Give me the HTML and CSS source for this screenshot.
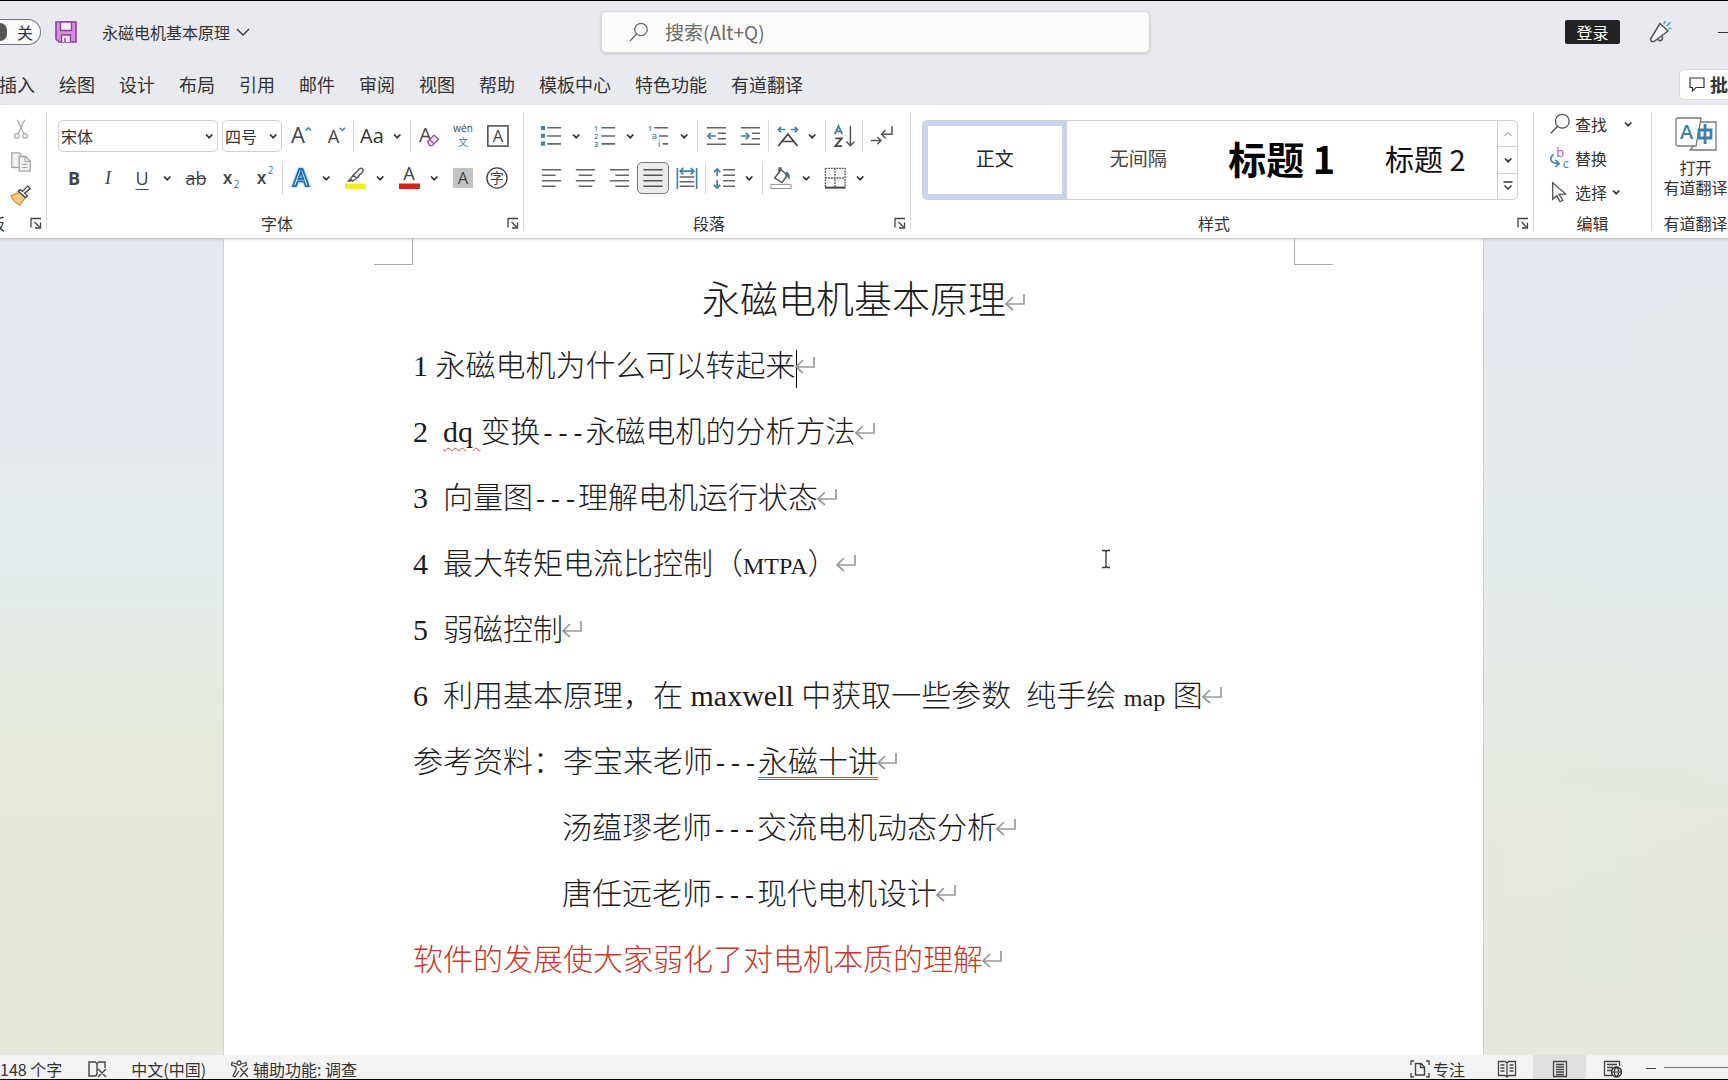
FILE: index.html
```html
<!DOCTYPE html>
<html lang="zh-CN">
<head>
<meta charset="utf-8">
<title>永磁电机基本原理</title>
<link rel="stylesheet" href="styles.css">
</head>
<body>
<svg class="defs" aria-hidden="true">
  <symbol id="chev" viewBox="0 0 16 16"><path d="M5 6.500l3.200 3.200L11.400 6.500" fill="none" stroke="#333" stroke-width="1.700"/></symbol>
  <symbol id="launch" viewBox="0 0 12 12"><path d="M1 10.500V1.500h10M4.500 5l5 5M10.500 5.500v5.500H5" fill="none" stroke="#444" stroke-width="1.300"/></symbol>
  <symbol id="ret" viewBox="0 0 22 22"><path d="M20 3v10H2.500M9 6l-7 7 7 6" fill="none" stroke="#999" stroke-width="1.700"/></symbol>
</svg>

<header class="titlebar">
  <div class="title-left">
    <button class="toggle" role="switch" aria-checked="false"><span class="knob"></span>关</button>
    <button class="bare save" aria-label="保存"><svg width="22" height="22" viewBox="0 0 22 22"><path d="M1 1h20v20H4l-3-3z" fill="#d58fdd" stroke="#8d3f9c" stroke-width="1.600"/><path d="M5.500 1v8.500h11V1z" fill="#f6eef8" stroke="#8d3f9c" stroke-width="1.400"/><path d="M6.500 21v-7h9v7M10 21v-4" fill="#f6eef8" stroke="#8d3f9c" stroke-width="1.400"/></svg></button>
    <button class="bare doc-name">永磁电机基本原理<svg width="14" height="14" viewBox="0 0 14 14"><path d="M1 4l6 6 6-6" fill="none" stroke="#333" stroke-width="1.300"/></svg></button>
  </div>
  <label class="search"><svg width="20" height="20" viewBox="0 0 20 20"><circle cx="12" cy="7.500" r="6.200" fill="none" stroke="#666" stroke-width="1.300"/><path d="M7.500 12L1 19" stroke="#666" stroke-width="1.300"/></svg><input type="text" placeholder="搜索(Alt+Q)" aria-label="搜索"></label>
  <div class="title-right">
    <button class="login">登录</button>
    <button class="bare horn" aria-label="反馈"><svg width="24" height="24" viewBox="0 0 24 24"><path d="M11 3.500l8 7.500L5 21.500H2.500L1.500 19zM9 19c1 3 5 2 4.500-2.500" fill="#f8f8fa" stroke="#555" stroke-width="1.500"/><path d="M15 4l1-3M18 6l3.500-4M19.500 8.500h3" stroke="#4b9cc8" stroke-width="1.500"/></svg></button>
    <button class="bare minimize" aria-label="最小化"><span></span></button>
  </div>
</header>

<nav class="tabs">
  <button>插入</button><button>绘图</button><button>设计</button><button>布局</button><button>引用</button><button>邮件</button><button>审阅</button><button>视图</button><button>帮助</button><button>模板中心</button><button>特色功能</button><button>有道翻译</button>
  <button class="comments"><svg width="16" height="15" viewBox="0 0 16 15"><path d="M1 1h14v9.500H7L3.500 14v-3.500H1z" fill="none" stroke="#333" stroke-width="1.200"/></svg>批</button>
</nav>

<section class="ribbon">
  <div class="group clipboard">
    <div class="stack">
      <button class="tool" aria-label="剪切"><svg viewBox="0 0 24 24"><path d="M8 2l7 15M16 2L9 17" fill="none" stroke="#a5a5a5" stroke-width="1.300"/><circle cx="7.500" cy="19.500" r="2.500" fill="none" stroke="#aaa" stroke-width="1.300"/><circle cx="16.500" cy="19.500" r="2.500" fill="none" stroke="#aaa" stroke-width="1.300"/></svg></button>
      <button class="tool" aria-label="复制"><svg viewBox="0 0 24 24"><path d="M10 18H2V2h8l2 2v2M10 6h7l5 5v11H10z" fill="#f1f1f1" stroke="#a5a5a5" stroke-width="1.400"/><path d="M16.500 6v5.500H22M13 14.500h6M13 18h6" fill="none" stroke="#a5a5a5" stroke-width="1.200"/></svg></button>
      <button class="tool" aria-label="格式刷"><svg viewBox="0 0 24 24"><path d="M10 7l-2 3-7 3c2 4 5 8 10 10l4-6 2-3z" fill="#f7c982" stroke="#d98d36" stroke-width="1.300"/><path d="M9 8l8 7 2-2-3-3 6-5-2.500-3-6 6-2.500-2z" fill="#fff" stroke="#444" stroke-width="1.400"/></svg></button>
    </div>
    <footer><span>板</span><button class="launcher" aria-label="剪贴板选项"><svg><use href="#launch"/></svg></button></footer>
  </div>

  <div class="group font">
    <div class="row">
      <span class="combo family"><select aria-label="字体"><option>宋体</option></select><svg><use href="#chev"/></svg></span>
      <span class="combo size"><select aria-label="字号"><option>四号</option></select><svg><use href="#chev"/></svg></span>
      <button class="tool" aria-label="增大字号"><svg viewBox="0 0 24 24"><text x="1" y="20" font-size="24">A</text><path d="M17 6l3-3 3 3" fill="none" stroke="#3487ad" stroke-width="1.600"/></svg></button>
      <button class="tool" aria-label="减小字号"><svg viewBox="0 0 24 24"><text x="4" y="20" font-size="20">A</text><path d="M17 3l3 3 3-3" fill="none" stroke="#3487ad" stroke-width="1.600"/></svg></button>
      <i class="sep"></i>
      <button class="tool case">Aa</button><button class="chev" aria-label="更改大小写"><svg><use href="#chev"/></svg></button>
      <i class="sep"></i>
      <button class="tool" aria-label="清除格式"><svg viewBox="0 0 24 24"><text x="1" y="19" font-size="22">A</text><path d="M10.500 18l7-7 5 4.500-7 7h-3z" fill="#f3dcf6" stroke="#9a4dab" stroke-width="1.500"/><path d="M12.500 15.500l5 5" stroke="#9a4dab" stroke-width="1.300"/></svg></button>
      <button class="tool" aria-label="拼音指南"><svg viewBox="0 0 24 24"><text x="12" y="8" font-size="11" text-anchor="middle">wén</text><text x="12" y="23" font-size="11" text-anchor="middle" class="blue">文</text></svg></button>
      <button class="tool" aria-label="字符边框"><svg viewBox="0 0 24 24"><rect x="2" y="1" width="22" height="22" fill="none" stroke="#444" stroke-width="1.600"/><text x="13" y="18" font-size="18" text-anchor="middle">A</text></svg></button>
    </div>
    <div class="row">
      <button class="tool bold">B</button>
      <button class="tool italic">I</button>
      <button class="tool underline">U</button><button class="chev" aria-label="下划线样式"><svg><use href="#chev"/></svg></button>
      <button class="tool strike">ab</button>
      <button class="tool" aria-label="下标"><svg viewBox="0 0 24 24"><text x="4" y="18" font-size="19" class="strong">x</text><text x="16" y="23" font-size="11" class="blue">2</text></svg></button>
      <button class="tool" aria-label="上标"><svg viewBox="0 0 24 24"><text x="4" y="18" font-size="19" class="strong">x</text><text x="16" y="8" font-size="11" class="blue">2</text></svg></button>
      <i class="sep"></i>
      <button class="tool" aria-label="文本效果"><svg viewBox="0 0 24 24"><text x="12" y="21" font-size="26" text-anchor="middle" class="glow">A</text></svg></button><button class="chev" aria-label="文本效果选项"><svg><use href="#chev"/></svg></button>
      <button class="tool" aria-label="突出显示"><svg viewBox="0 0 24 24"><path d="M10 9l7-7c2-2 5 1 3.500 3L14 12zM10 9l-3 4 2.500 2.500L14 12" fill="#fff" stroke="#555" stroke-width="1.500"/><path d="M6.500 12.500L3 16h4.500l2-1z" fill="#555"/><path d="M1 18h23v6H1z" fill="#f3ea35"/></svg></button><button class="chev" aria-label="突出显示颜色"><svg><use href="#chev"/></svg></button>
      <button class="tool" aria-label="字体颜色"><svg viewBox="0 0 24 24"><text x="12" y="14" font-size="20" text-anchor="middle">A</text><path d="M1 18h23v6H1z" fill="#c9281d"/></svg></button><button class="chev" aria-label="更多字体颜色"><svg><use href="#chev"/></svg></button>
      <button class="tool" aria-label="字符底纹"><svg viewBox="0 0 24 24"><path d="M1 1h22v22H1z" fill="#c3c3c3"/><text x="12" y="18" font-size="18" text-anchor="middle">A</text></svg></button>
      <button class="tool" aria-label="带圈字符"><svg viewBox="0 0 24 24"><circle cx="12" cy="12" r="11" fill="none" stroke="#444" stroke-width="1.500"/><text x="12" y="17" font-size="15" text-anchor="middle">字</text></svg></button>
    </div>
    <footer><span>字体</span><button class="launcher" aria-label="字体选项"><svg><use href="#launch"/></svg></button></footer>
  </div>

  <div class="group para">
    <div class="row">
      <button class="tool" aria-label="项目符号"><svg viewBox="0 0 24 24"><path d="M8 3h15M8 12h15M8 20.500h15" stroke="#666" stroke-width="1.900"/><path d="M1 1h4.500v4.500H1zM1 9.500h4.500V14H1zM1 18h4.500v4.500H1z" fill="#3b83a8"/></svg></button><button class="chev" aria-label="项目符号库"><svg><use href="#chev"/></svg></button>
      <button class="tool" aria-label="编号"><svg viewBox="0 0 24 24"><path d="M8 3h15M8 12h15M8 20.500h15" stroke="#666" stroke-width="1.900"/><text x="0" y="6" font-size="8" class="blue strong">1</text><text x="0" y="15" font-size="8" class="blue strong">2</text><text x="0" y="24" font-size="8" class="blue strong">3</text></svg></button><button class="chev" aria-label="编号库"><svg><use href="#chev"/></svg></button>
      <button class="tool" aria-label="多级列表"><svg viewBox="0 0 24 24"><path d="M7 3h15M12 12h10M16 20.500h6" stroke="#666" stroke-width="1.900"/><text x="0" y="6" font-size="8" class="blue strong">1</text><text x="4" y="15" font-size="10" class="blue strong">a</text><text x="11" y="24" font-size="9" class="blue strong">i</text></svg></button><button class="chev" aria-label="列表库"><svg><use href="#chev"/></svg></button>
      <i class="sep"></i>
      <button class="tool" aria-label="减少缩进"><svg viewBox="0 0 24 24"><path d="M2 3h21M14 9h9M14 15h9M2 21h21" stroke="#666" stroke-width="1.700"/><path d="M12 12H3M6.500 8.500L3 12l3.500 3.500" fill="none" stroke="#3b83a8" stroke-width="1.800"/></svg></button>
      <button class="tool" aria-label="增加缩进"><svg viewBox="0 0 24 24"><path d="M2 3h21M14 9h9M14 15h9M2 21h21" stroke="#666" stroke-width="1.700"/><path d="M2 12h9M7.500 8.500L11 12l-3.500 3.500" fill="none" stroke="#3b83a8" stroke-width="1.800"/></svg></button>
      <i class="sep"></i>
      <button class="tool" aria-label="中文版式"><svg viewBox="0 0 24 24"><path d="M2.500 23L13 10l10.500 13M6.500 18h13" fill="none" stroke="#444" stroke-width="1.800"/><path d="M2 5h8M5.500 2l-3 3 3 3M16 5h8M20.500 2l3 3-3 3" fill="none" stroke="#3b83a8" stroke-width="1.700"/></svg></button><button class="chev" aria-label="版式选项"><svg><use href="#chev"/></svg></button>
      <i class="sep"></i>
      <button class="tool" aria-label="排序"><svg viewBox="0 0 24 24"><path d="M2 10L6 1l4 9M3.500 7h5" fill="none" stroke="#3b83a8" stroke-width="2"/><path d="M2.500 14.500h7L2.500 23H10" fill="none" stroke="#444" stroke-width="2"/><path d="M19 1v21M14.500 18l4.500 4.500 4.500-4.500" fill="none" stroke="#555" stroke-width="1.600"/></svg></button>
      <i class="sep"></i>
      <button class="tool" aria-label="显示编辑标记"><svg viewBox="0 0 24 24"><path d="M24 1v9H13M17 5.500L12.500 10l4.500 4.500M1 17h11M8 13l4 4-4 4" fill="none" stroke="#555" stroke-width="1.600"/></svg></button>
    </div>
    <div class="row">
      <button class="tool" aria-label="左对齐"><svg viewBox="0 0 24 24"><path d="M2 3h21M2 9h15M2 15h21M2 21h15" stroke="#666" stroke-width="1.800"/></svg></button>
      <button class="tool" aria-label="居中"><svg viewBox="0 0 24 24"><path d="M2 3h21M5 9h15M2 15h21M5 21h15" stroke="#666" stroke-width="1.800"/></svg></button>
      <button class="tool" aria-label="右对齐"><svg viewBox="0 0 24 24"><path d="M2 3h21M8 9h15M2 15h21M8 21h15" stroke="#666" stroke-width="1.800"/></svg></button>
      <button class="tool pressed" aria-label="两端对齐" aria-pressed="true"><svg viewBox="0 0 24 24"><path d="M1.500 3h21M1.500 9h21M1.500 15h21M1.500 21h21" stroke="#555" stroke-width="1.800"/></svg></button>
      <button class="tool" aria-label="分散对齐"><svg viewBox="0 0 24 24"><path d="M4 11h16M4 16h16M4 21h16" stroke="#666" stroke-width="1.700"/><path d="M1.500 1v23M22.500 1v23M5 4.500h14M8 1l-3.500 3.500L8 8M16 1l3.500 3.500L16 8" fill="none" stroke="#3b83a8" stroke-width="1.800"/></svg></button>
      <i class="sep"></i>
      <button class="tool" aria-label="行距"><svg viewBox="0 0 24 24"><path d="M11 3h13M11 9h13M11 15h13M11 21h13" stroke="#666" stroke-width="1.800"/><path d="M4.500 2v8M1 5.500L4.500 2 8 5.500M4.500 14v9M1 19.500L4.500 23 8 19.500" fill="none" stroke="#3b83a8" stroke-width="1.800"/></svg></button><button class="chev" aria-label="行距选项"><svg><use href="#chev"/></svg></button>
      <i class="sep"></i>
      <button class="tool" aria-label="底纹"><svg viewBox="0 0 24 24"><path d="M12 3l-7 9 8 5 6-8-7-6V1h-2v6" fill="#fff" stroke="#555" stroke-width="1.600"/><path d="M18 5c4 2 4 6 3 10-1-3-1-5-5-6z" fill="#3b6d8a"/><path d="M1 19h22v4.500H1z" fill="#fff" stroke="#888"/></svg></button><button class="chev" aria-label="底纹颜色"><svg><use href="#chev"/></svg></button>
      <button class="tool" aria-label="边框"><svg viewBox="0 0 24 24"><path d="M1.500 1.500H23V22M1.500 1.500V22M12 1.500V22M1.500 12H23" fill="none" stroke="#555" stroke-width="1.500" stroke-dasharray="2 1"/><path d="M1 22.500h22.500" stroke="#444" stroke-width="2.200"/></svg></button><button class="chev" aria-label="边框选项"><svg><use href="#chev"/></svg></button>
    </div>
    <footer><span>段落</span><button class="launcher" aria-label="段落选项"><svg><use href="#launch"/></svg></button></footer>
  </div>

  <div class="group styles">
    <div class="gallery">
      <button class="style current">正文</button>
      <button class="style">无间隔</button>
      <button class="style h1">标题 1</button>
      <button class="style h2">标题 2</button>
      <div class="spinner">
        <button class="dim" aria-label="上一行"><svg viewBox="0 0 16 16"><path d="M4.500 10L8 6.500l3.500 3.500" fill="none" stroke="#bbb" stroke-width="1.500"/></svg></button>
        <button aria-label="下一行"><svg><use href="#chev"/></svg></button>
        <button aria-label="更多样式"><svg viewBox="0 0 16 16"><path d="M3.500 4h9M4.500 7.500L8 11l3.500-3.500" fill="none" stroke="#333" stroke-width="1.500"/></svg></button>
      </div>
    </div>
    <footer><span>样式</span><button class="launcher" aria-label="样式选项"><svg><use href="#launch"/></svg></button></footer>
  </div>

  <div class="group editing">
    <div class="commands">
      <button><svg viewBox="0 0 24 24"><circle cx="14.500" cy="9" r="7.500" fill="none" stroke="#555" stroke-width="1.500"/><path d="M9.500 14.500L2 22" stroke="#555" stroke-width="1.600"/></svg>查找<svg class="arrow far"><use href="#chev"/></svg></button>
      <button><svg viewBox="0 0 24 24"><text x="8" y="11" font-size="14" class="purple">b</text><text x="15" y="23" font-size="14" class="blue">c</text><path d="M5 8c-5 4-4 10 5 10M7 14l4 4-4 4" fill="none" stroke="#3b83a8" stroke-width="1.700"/></svg>替换</button>
      <button><svg viewBox="0 0 24 24"><path d="M4 2l14 12-7 .500 4 6.500-3 1.500-3.500-6.500L4 20z" fill="#fff" stroke="#555" stroke-width="1.500"/></svg>选择<svg class="arrow"><use href="#chev"/></svg></button>
    </div>
    <footer><span>编辑</span></footer>
  </div>

  <div class="group youdao">
    <button class="big"><svg width="42" height="34" viewBox="0 0 42 34"><path d="M24 5h17v28H15l6-7z" fill="#fff" stroke="#777" stroke-width="1.300"/><path d="M1 3q0-2 2-2h23l-5 28H3q-2 0-2-2z" fill="#fff" stroke="#777" stroke-width="1.300"/><text x="5" y="22" font-size="20" class="blue strong">A</text><path d="M24 13h12v8H24zM30 7v20" fill="none" stroke="#3f7fae" stroke-width="2.800"/></svg><span>打开</span><span>有道翻译</span></button>
    <footer><span>有道翻译</span></footer>
  </div>
</section>

<main class="canvas">
  <article class="page">
    <div class="corners"><i class="corner left"></i><i class="corner right"></i></div>
    <div class="text">
      <h1>永磁电机基本原理<svg class="ret"><use href="#ret"/></svg></h1>
      <p>1 永磁电机为什么可以转起来<i class="caret"></i><svg class="ret"><use href="#ret"/></svg></p>
      <p>2  <span class="misspelt">dq </span>变换<span class="dash">---</span>永磁电机的分析方法<svg class="ret"><use href="#ret"/></svg></p>
      <p>3  向量图<span class="dash">---</span>理解电机运行状态<svg class="ret"><use href="#ret"/></svg></p>
      <p>4  最大转矩电流比控制（<span class="narrow">MTPA</span>）<svg class="ret"><use href="#ret"/></svg></p>
      <p>5  弱磁控制<svg class="ret"><use href="#ret"/></svg></p>
      <p>6  利用基本原理，在 maxwell 中获取一些参数  纯手绘 <span class="narrow">map</span> 图<svg class="ret"><use href="#ret"/></svg></p>
      <p>参考资料：李宝来老师<span class="dash">---</span><span class="grammar">永磁十讲</span><svg class="ret"><use href="#ret"/></svg></p>
      <p class="indent">汤蕴璆老师<span class="dash">---</span>交流电机动态分析<svg class="ret"><use href="#ret"/></svg></p>
      <p class="indent">唐任远老师<span class="dash">---</span>现代电机设计<svg class="ret"><use href="#ret"/></svg></p>
      <p class="red">软件的发展使大家弱化了对电机本质的理解<svg class="ret"><use href="#ret"/></svg></p>
    </div>
  </article>
  <svg class="pointer" width="10" height="20" viewBox="0 0 10 20"><path d="M1 1.500h3l1 1 1-1h3M5 2.500v15M1 18.500h3l1-1 1 1h3" fill="none" stroke="#333" stroke-width="1.300"/></svg>
</main>

<footer class="status">
  <button>148 个字</button>
  <button class="proof" aria-label="校对"><svg width="20" height="18" viewBox="0 0 20 18"><path d="M9 15l-2 1H1V2h6l2 1.500V15M9 3.500L11 2h6v6M10 9l8 8M18 9l-8 8" fill="none" stroke="#444" stroke-width="1.400"/></svg></button>
  <button class="lang">中文(中国)</button>
  <button class="access"><svg width="20" height="18" viewBox="0 0 20 18"><circle cx="9" cy="3" r="2" fill="none" stroke="#444" stroke-width="1.300"/><path d="M6.500 4L2 2.500 1.500 5 6 7v3l-3 6 2 1 4-6M11.500 4L16 2.500l.500 2.500L12 7M10 8l8 9M18 8l-8 9" fill="none" stroke="#444" stroke-width="1.300"/></svg>辅助功能: 调查</button>
  <div class="views">
    <button class="focus"><svg width="20" height="18" viewBox="0 0 20 18"><path d="M1 5V1h3M16 1h3v4M1 13v4h3M16 17h3v-4" fill="none" stroke="#444" stroke-width="1.300"/><path d="M5.500 3.500H11l3.500 3.500v8h-9zM10.500 3.500V7.500h4" fill="none" stroke="#444" stroke-width="1.400"/></svg>专注</button>
    <button class="view" aria-label="阅读视图"><svg width="20" height="18" viewBox="0 0 20 18"><path d="M10 3L8 1.500H1.500v14H8l2 1.500 2-1.500h6.500v-14H12zv14M3.500 5h4M3.500 8h4M3.500 11h4M12.500 5h4M12.500 8h4M12.500 11h4" fill="none" stroke="#444" stroke-width="1.300"/></svg></button>
    <button class="view active" aria-label="页面视图"><svg width="20" height="18" viewBox="0 0 20 18"><path d="M3.500 1.500h13v15h-13zM6 4.500h8M6 7h8M6 9.500h8M6 12h8M6 14.500h8" fill="none" stroke="#444" stroke-width="1.300"/></svg></button>
    <button class="view" aria-label="Web 版式"><svg width="20" height="18" viewBox="0 0 20 18"><path d="M9 15.500H1.500v-14h15V6M4 4.500h10M4 7.500h6M4 10.500h4" fill="none" stroke="#444" stroke-width="1.300"/><circle cx="13.500" cy="12" r="5" fill="#ddd" stroke="#333" stroke-width="1.400"/><path d="M8.500 12h10M13.500 7c-3 3-3 7 0 10M13.500 7c3 3 3 7 0 10" fill="none" stroke="#333" stroke-width="1.200"/></svg></button>
    <button class="zoom-out" aria-label="缩小"></button>
    <i class="track"></i>
  </div>
</footer>
</body>
</html>
```
FILE: styles.css
```css
* { box-sizing: border-box; }
body {
  margin: 0;
  min-height: 100vh;
  display: flex;
  flex-direction: column;
  overflow-x: hidden;
  border-top: 1px solid #000;
  border-bottom: 1px solid #000;
  background: #e8eaf0;
  color: #333;
  font: 16px/20px "Noto Sans CJK SC", sans-serif;
}
button, input, select { font: inherit; color: inherit; margin: 0; }
button { border: 0; padding: 0; background: none; white-space: nowrap; }
.defs { display: none; }
svg { flex: none; }
svg text { fill: #444; font-family: "Open Sans", "Noto Sans CJK SC", sans-serif; }
svg .blue { fill: #3b83a8; }
svg .purple { fill: #a55cb0; }
svg .strong { font-weight: 600; }
svg .glow { fill: #fff; stroke: #1f70ae; stroke-width: 2; font-weight: 600; filter: drop-shadow(0 0 1px #5cb4ea); }

/* title bar */
.titlebar { display: flex; align-items: center; height: 62px; }
.title-left { display: flex; align-items: center; width: 601px; }
.bare { display: flex; align-items: center; }
.toggle {
  display: flex; align-items: center; gap: 10px;
  width: 41px; height: 26px;
  border: 1px solid #777; border-left: 0; border-radius: 0 13px 13px 0;
  background: #fbfbfc;
}
.knob { width: 7px; height: 18px; border-radius: 0 9px 9px 0; background: #555; }
.save { margin-left: 14px; }
.doc-name { margin-left: 25px; gap: 6px; }
.search {
  display: flex; align-items: center; gap: 16px;
  flex: 0 1 549px; height: 42px; padding: 0 27px;
  border: 1px solid #d5d7db; border-radius: 5px;
  background: #fafbfa; box-shadow: 0 1px 3px #c5c7cc;
}
.search input { flex: 1; min-width: 0; border: 0; padding: 0; background: none; outline: 0; font-size: 19px; line-height: 24px; }
.search input::placeholder { color: #6b6b6b; opacity: 1; }
.title-right { display: flex; align-items: center; margin-left: auto; }
.login { width: 55px; height: 24px; border-radius: 2px; background: #222; color: #fff; }
.horn { margin: 0 45px 0 29px; }
.minimize span { width: 10px; height: 1px; background: #333; }

/* tabs */
.tabs { display: flex; align-items: center; gap: 24px; height: 42px; margin-left: -1px; font-size: 18px; line-height: 24px; }
.comments {
  display: flex; align-items: center; gap: 5px;
  margin-left: auto; width: 49px; height: 31px; padding-left: 9px;
  border: 1px solid #d8d9dd; border-right: 0; border-radius: 5px 0 0 5px;
  background: #fff; font-weight: 700;
}

/* ribbon */
.ribbon {
  display: flex; height: 133px; padding: 7px 0;
  background: #fff; position: relative; z-index: 1;
  box-shadow: 0 1px 3px #b5b5b9;
}
.group { display: flex; flex-direction: column; flex: none; padding-top: 8px; border-right: 1px solid #d6d6d6; }
.group > footer { display: flex; align-items: center; justify-content: center; margin-top: auto; height: 16px; }
.group > footer span { flex: 1; text-align: center; }
.launcher { display: flex; margin-right: 4px; }
.launcher svg { width: 12px; height: 12px; }
.row { display: flex; align-items: center; height: 32px; margin-bottom: 10px; }
.tool { display: flex; align-items: center; justify-content: center; width: 34px; height: 32px; flex: none; }
.tool svg { width: 22px; height: 22px; overflow: visible; }
.chev { display: flex; width: 16px; margin-right: 4px; }
.chev svg, .combo svg { width: 16px; height: 16px; }
.sep { width: 1px; height: 32px; margin: 0 1px; background: #d6d6d6; }
.pressed { position: relative; z-index: 0; }
.pressed::before { content: ""; position: absolute; z-index: -1; inset: 0 1px; border: 1px solid #777; border-radius: 5px; background: #ebebeb; }

.clipboard { width: 47px; padding-top: 0; }
.clipboard .stack { padding-left: 4px; }
.clipboard .stack .tool { height: 33px; }
.clipboard footer span { direction: rtl; flex: 0 0 5px; overflow: hidden; }
.clipboard footer { justify-content: space-between; }

.font { width: 477px; }
.font .row { padding-left: 10px; }
.font .row:first-child { padding-left: 11px; }
.combo { display: grid; align-items: center; justify-items: end; height: 32px; border: 1px solid #d0d0d0; border-radius: 5px; }
.combo > * { grid-area: 1 / 1; }
.combo svg { pointer-events: none; }
.combo select { appearance: none; width: 100%; height: 30px; border: 0; padding: 0 2px; background: none; }
.family { width: 160px; margin-right: 4px; }
.size { width: 60px; margin-right: 2px; }
.case { font: 20px/24px "Open Sans", sans-serif; }
.bold, .italic, .underline, .strike { font: 18px/24px "Open Sans", sans-serif; color: #444; }
.bold { font-weight: 700; }
.italic { font-family: "Liberation Serif", serif; font-style: italic; }
.underline { text-decoration: underline; text-underline-offset: 4px; }
.strike { text-decoration: line-through; }

.para { width: 387px; }
.para .row { padding-left: 10px; }

.styles { flex: 1; min-width: 400px; }
.gallery { display: flex; height: 80px; margin: 0 15px 0 11px; border: 1px solid #d0d0d0; border-radius: 5px; }
.style { flex: 1; min-width: 0; border: 5px solid transparent; padding-bottom: 4px; font-size: 19px; line-height: 24px; color: #444; }
.current { border-color: #c8d4ea; color: #222; }
.style.h1 { font-size: 38px; line-height: 44px; font-weight: 700; color: #000; }
.style.h2 { font-size: 29px; line-height: 36px; color: #111; }
.spinner { display: flex; flex-direction: column; width: 20px; border-left: 1px solid #d0d0d0; }
.spinner button { flex: 1; display: flex; align-items: center; justify-content: center; }
.spinner button + button { border-top: 1px solid #d0d0d0; }
.spinner svg { width: 16px; height: 16px; }

.editing { width: 118px; padding-top: 0; }
.commands { display: flex; flex-direction: column; margin-top: -2px; }
.commands button { display: flex; align-items: center; gap: 4px; height: 34px; padding: 0 0 6px 15px; }
.commands svg { width: 22px; height: 22px; overflow: visible; }
.commands .arrow { width: 16px; height: 16px; margin-left: -3px; }
.commands .far { margin-left: 9px; }

.youdao { flex: 0 0 76px; border: 0; padding-top: 5px; align-items: flex-end; }
.big { display: flex; flex-direction: column; align-items: center; width: 65px; }
.big span:first-of-type { margin-top: 6px; }
.youdao footer { width: 65px; }

/* document */
.canvas {
  flex: 1; display: flex; justify-content: center;
  padding-right: 21px; position: relative;
  background:
    linear-gradient(90deg, transparent 40%, rgba(226, 232, 234, .4)),
    linear-gradient(180deg, #e5e8f1 0%, #e5eaef 28%, #e3ecee 38%, #e5ebe4 50%, #e7ead9 70%, #e6e9d7 100%);
}
.page { width: 1261px; background: #fff; border: solid #d0d4d0; border-width: 0 1px; }
.corners { display: flex; justify-content: space-between; padding: 0 150px; height: 27px; }
.corner { width: 39px; border-bottom: 1px solid #aaa; }
.corner.left { border-right: 1px solid #aaa; }
.corner.right { border-left: 1px solid #aaa; }
.text { padding: 2px 188px 0 189px; font: 30px/66px "Liberation Serif", "Noto Sans CJK SC", serif; font-weight: 300; color: #1c1c1c; }
.text h1 { margin: 0; font-size: 38px; line-height: 66px; font-weight: 300; text-align: center; }
.text p { margin: 0; white-space: pre; }
.ret { width: 22px; height: 22px; margin-left: -2px; }
h1 .ret { margin-right: -20px; }
.dash { font: 25px/30px "Liberation Mono", monospace; }
.narrow { font-size: 24px; line-height: 30px; }
.misspelt { text-decoration: underline wavy #c4453c 1px; text-underline-offset: 5px; }
.grammar { text-decoration: underline double #3f7aa5 1px; text-underline-offset: 5px; }
.text .indent { padding-left: 149px; }
.red { color: #c5382a; }
.caret { display: inline-block; width: 1px; height: 38px; background: #000; vertical-align: middle; margin-right: -1px; }
.pointer { position: absolute; left: 1101px; top: 311px; }

/* status bar */
.status { display: flex; align-items: center; height: 24px; padding-top: 4px; background: #f3f3f3; position: relative; }
.status button { display: flex; align-items: center; gap: 3px; }
.proof { margin-left: 26px; }
.lang { margin-left: 23px; }
.access { margin-left: 24px; }
.views { display: flex; align-items: center; align-self: stretch; margin: -4px 0 0 auto; }
.status .views button { height: 24px; padding-top: 4px; }
.focus { margin-right: 15px; }
.status .view { justify-content: center; width: 53px; }
.active { background: #dfdfdf; }
.zoom-out { width: 10px; margin: 0 8px 0 7px; }
.zoom-out::before { content: ""; width: 10px; height: 1px; margin-top: -2px; background: #444; }
.track { width: 64px; height: 1px; background: #777; }
```
